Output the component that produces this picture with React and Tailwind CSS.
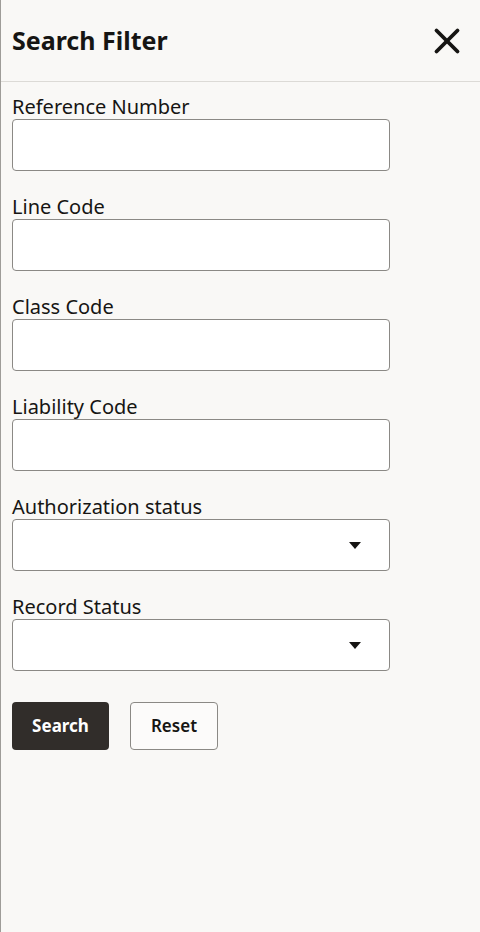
import { X } from "lucide-react";

const FIELDS = [
  { key: "ref", label: "Reference Number", type: "text" },
  { key: "line", label: "Line Code", type: "text" },
  { key: "class", label: "Class Code", type: "text" },
  { key: "liability", label: "Liability Code", type: "text" },
  { key: "auth", label: "Authorization status", type: "select" },
  { key: "record", label: "Record Status", type: "select" },
];

function Field({ label, type }) {
  return (
    <div className="flex flex-col">
      <label className="text-[20px] leading-[24px] text-[#161513]">{label}</label>
      <div className="h-[52px] w-[378px] rounded-[4px] border border-[#8b8985] bg-white flex items-center justify-end pr-[28px]">
        {type === "select" && (
          <svg width="12" height="7" viewBox="0 0 12 7">
            <path d="M0 0h12L6 7z" fill="#161513" />
          </svg>
        )}
      </div>
    </div>
  );
}

export default function App() {
  return (
    <div
      className="w-[480px] h-[932px] bg-[#f9f8f6] border-l border-[#9e9c98] flex flex-col"
      style={{ fontFamily: '"Noto Sans", "Open Sans", sans-serif' }}
    >
      {/* Header */}
      <div className="h-[82px] flex items-center justify-between pl-[11px] pr-[12px] border-b border-[#dcdad6] shrink-0">
        <h1 className="text-[25px] font-bold text-[#161513]">Search Filter</h1>
        <X size={42} strokeWidth={2.2} color="#161513" />
      </div>

      {/* Form */}
      <div className="flex flex-col gap-[24px] px-[11px] pt-[13px]">
        {FIELDS.map((f) => (
          <Field key={f.key} label={f.label} type={f.type} />
        ))}
      </div>

      <div className="flex gap-[21px] px-[11px] mt-[31px]">
        <button className="h-[48px] w-[97px] rounded-[4px] bg-[#312d2a] text-white text-[17px] font-bold">
          Search
        </button>
        <button className="h-[48px] w-[88px] rounded-[4px] border border-[#8b8985] bg-[#fcfbfa] text-[#161513] text-[17px] font-semibold">
          Reset
        </button>
      </div>
    </div>
  );
}
